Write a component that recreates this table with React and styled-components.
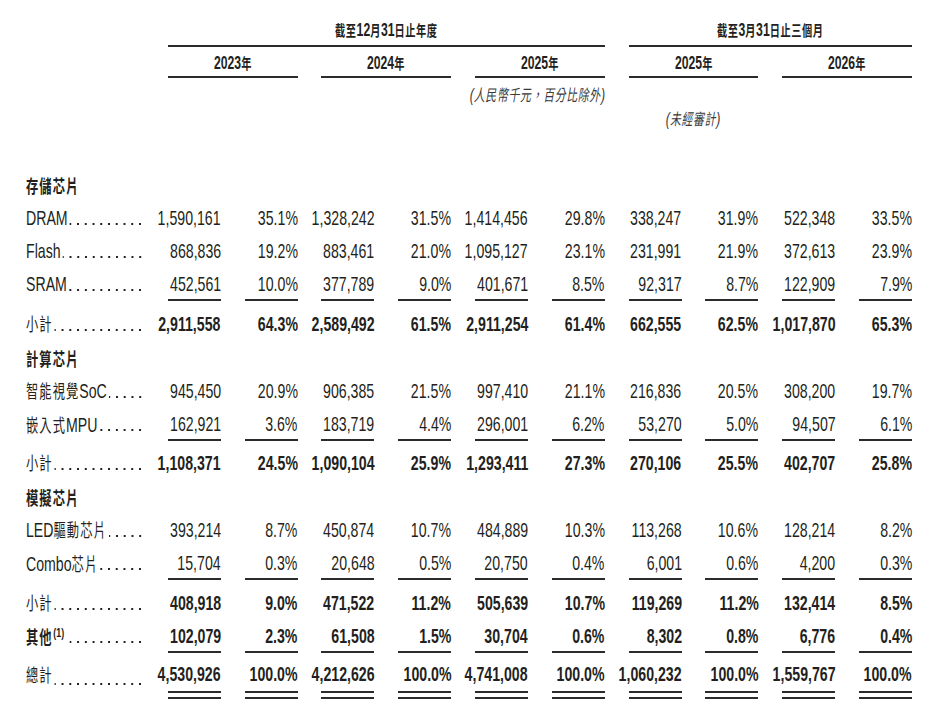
import React from 'react';
import styled, { createGlobalStyle, css } from 'styled-components';

const INK = '#231f20';
const RULE = '#2b2b2b';
const SQUEEZE = 0.68;
const LATIN = `"Liberation Sans", Arial, sans-serif`;
const HAN = `"Noto Sans CJK TC", "Noto Sans CJK SC", sans-serif`;
const HAN_RE = /([\u2e80-\u9fff\uf900-\ufaff\uff00-\uffef\u3000-\u303f]+)/;

const BODY_HAN = { size: 18, ls: 1.6 };
const HEAD_HAN = { size: 15, ls: 0.8 };
const NOTE_HAN = { size: 16, ls: 1 };

const ROWS = [
  { kind: 'section', label: '存儲芯片', mt: 45 },
  { kind: 'item', label: 'DRAM', values: ['1,590,161', '35.1%', '1,328,242', '31.5%', '1,414,456', '29.8%', '338,247', '31.9%', '522,348', '33.5%'] },
  { kind: 'item', label: 'Flash', values: ['868,836', '19.2%', '883,461', '21.0%', '1,095,127', '23.1%', '231,991', '21.9%', '372,613', '23.9%'] },
  { kind: 'item', label: 'SRAM', rule: 'single', values: ['452,561', '10.0%', '377,789', '9.0%', '401,671', '8.5%', '92,317', '8.7%', '122,909', '7.9%'] },
  { kind: 'sum', label: '小計', mt: 6, values: ['2,911,558', '64.3%', '2,589,492', '61.5%', '2,911,254', '61.4%', '662,555', '62.5%', '1,017,870', '65.3%'] },
  { kind: 'section', label: '計算芯片', mt: 3 },
  { kind: 'item', label: '智能視覺SoC', values: ['945,450', '20.9%', '906,385', '21.5%', '997,410', '21.1%', '216,836', '20.5%', '308,200', '19.7%'] },
  { kind: 'item', label: '嵌入式MPU', rule: 'single', values: ['162,921', '3.6%', '183,719', '4.4%', '296,001', '6.2%', '53,270', '5.0%', '94,507', '6.1%'] },
  { kind: 'sum', label: '小計', mt: 5, values: ['1,108,371', '24.5%', '1,090,104', '25.9%', '1,293,411', '27.3%', '270,106', '25.5%', '402,707', '25.8%'] },
  { kind: 'section', label: '模擬芯片', mt: 3 },
  { kind: 'item', label: 'LED驅動芯片', values: ['393,214', '8.7%', '450,874', '10.7%', '484,889', '10.3%', '113,268', '10.6%', '128,214', '8.2%'] },
  { kind: 'item', label: 'Combo芯片', rule: 'single', values: ['15,704', '0.3%', '20,648', '0.5%', '20,750', '0.4%', '6,001', '0.6%', '4,200', '0.3%'] },
  { kind: 'sum', label: '小計', mt: 6, values: ['408,918', '9.0%', '471,522', '11.2%', '505,639', '10.7%', '119,269', '11.2%', '132,414', '8.5%'] },
  { kind: 'other', label: '其他', note: '(1)', rule: 'single', values: ['102,079', '2.3%', '61,508', '1.5%', '30,704', '0.6%', '8,302', '0.8%', '6,776', '0.4%'] },
  { kind: 'total', label: '總計', mt: 4, rule: 'double', values: ['4,530,926', '100.0%', '4,212,626', '100.0%', '4,741,008', '100.0%', '1,060,232', '100.0%', '1,559,767', '100.0%'] },
];

const YEARS = [
  { text: '2023年', col: '2 / span 2' },
  { text: '2024年', col: '4 / span 2' },
  { text: '2025年', col: '6 / span 2' },
  { text: '2025年', col: '8 / span 2' },
  { text: '2026年', col: '10 / span 2' },
];

const GlobalStyle = createGlobalStyle`
  html, body { margin: 0; padding: 0; background: #fff; }
  body { font-family: ${LATIN}; color: ${INK}; }
`;

const Page = styled.div`
  width: 941px;
  box-sizing: border-box;
  padding: 14px 0 0 26px;
`;

const Row = styled.div`
  display: grid;
  grid-template-columns: 118px repeat(10, 53px);
  column-gap: 23.8px;
  align-items: start;
  margin-top: ${(p) => p.$mt || 0}px;
`;

const rules = {
  single: css`
    border-bottom: 2px solid ${RULE};
  `,
  double: css`
    border-bottom: 2px solid ${RULE};
    background: linear-gradient(${RULE}, ${RULE}) 0 34px / 100% 2px no-repeat;
  `,
};

const Cell = styled.div`
  grid-column: ${(p) => p.$col || 'auto'};
  display: flex;
  justify-content: ${(p) => p.$align || 'flex-end'};
  box-sizing: border-box;
  height: ${(p) => p.$h}px;
  line-height: ${(p) => p.$lh || p.$h}px;
  white-space: nowrap;
  font-size: ${(p) => p.$size || 20.8}px;
  font-weight: ${(p) => (p.$bold ? 700 : 400)};
  ${(p) => p.$rule && rules[p.$rule]}
`;

const Squeeze = styled.span`
  display: inline-block;
  flex: none;
  transform: scaleX(${SQUEEZE});
  transform-origin: ${(p) => p.$origin || 'right'} center;
`;

const LabelBox = styled(Squeeze)`
  display: flex;
  width: ${118 / SQUEEZE}px;
`;

/* dot leader, right-aligned so the last dot meets the value column */
const Leader = styled.span`
  flex: 1;
  min-width: 0;
  align-self: center;
  height: 4px;
  margin: 12px 0 0 ${(p) => p.$gap || 3}px;
  background: radial-gradient(ellipse 1.7px 1.2px at center, ${INK} 90%, transparent 100%)
    right center / ${7.75 / SQUEEZE}px 4px repeat-x;
`;

const Han = styled.span`
  font-family: ${HAN};
  font-size: ${(p) => p.$size}px;
  letter-spacing: ${(p) => p.$ls}px;
`;

const Sup = styled.span`
  font-size: 13px;
  font-weight: 700;
  vertical-align: 7px;
  line-height: 0;
  margin-left: 1px;
`;

const Note = styled(Squeeze)`
  font-style: italic;
  font-weight: 400;
  font-size: 18px;
  color: #3a3a3a;
`;

const Mixed = ({ text, han }) =>
  text
    .split(HAN_RE)
    .filter(Boolean)
    .map((part, i) =>
      HAN_RE.test(part) ? (
        <Han key={i} $size={han.size} $ls={han.ls}>
          {part}
        </Han>
      ) : (
        <React.Fragment key={i}>{part}</React.Fragment>
      )
    );

const heightOf = (row) => {
  if (row.kind === 'section') return 31;
  if (row.kind === 'total') return 42;
  return row.rule ? 34 : 33;
};

const DataRow = ({ row }) => {
  const h = heightOf(row);
  const lh = row.kind === 'total' ? 34 : h;
  const boldLabel = row.kind === 'section' || row.kind === 'other';
  const boldValues = row.kind === 'sum' || row.kind === 'other' || row.kind === 'total';

  return (
    <Row $mt={row.mt}>
      <Cell $h={h} $lh={lh} $align="flex-start" $bold={boldLabel}>
        <LabelBox $origin="left">
          <span>
            <Mixed text={row.label} han={BODY_HAN} />
            {row.note && <Sup>{row.note}</Sup>}
          </span>
          {row.kind !== 'section' && <Leader $gap={row.note ? 8 : 3} />}
        </LabelBox>
      </Cell>
      {row.values &&
        row.values.map((v, i) => (
          <Cell key={i} $h={h} $lh={lh} $bold={boldValues} $rule={row.rule}>
            <Squeeze>{v}</Squeeze>
          </Cell>
        ))}
    </Row>
  );
};

const Header = () => (
  <>
    <Row>
      <Cell $col="2 / 8" $h={33} $lh={31} $align="center" $size={18} $bold $rule="single">
        <Squeeze $origin="center">
          <Mixed text="截至12月31日止年度" han={HEAD_HAN} />
        </Squeeze>
      </Cell>
      <Cell $col="8 / 12" $h={33} $lh={31} $align="center" $size={18} $bold $rule="single">
        <Squeeze $origin="center">
          <Mixed text="截至3月31日止三個月" han={HEAD_HAN} />
        </Squeeze>
      </Cell>
    </Row>
    <Row>
      {YEARS.map((y, i) => (
        <Cell key={i} $col={y.col} $h={31} $lh={31} $align="center" $size={18} $bold $rule="single">
          <Squeeze $origin="center">
            <Mixed text={y.text} han={HEAD_HAN} />
          </Squeeze>
        </Cell>
      ))}
    </Row>
    <Row>
      <Cell $col="2 / 8" $h={33}>
        <Note>
          <Mixed text="(人民幣千元，百分比除外)" han={NOTE_HAN} />
        </Note>
      </Cell>
    </Row>
    <Row>
      <Cell $col="8 / 10" $h={14} $align="center">
        <Note $origin="center">
          <Mixed text="(未經審計)" han={NOTE_HAN} />
        </Note>
      </Cell>
    </Row>
  </>
);

export default function App() {
  return (
    <Page>
      <GlobalStyle />
      <Header />
      {ROWS.map((row, i) => (
        <DataRow key={i} row={row} />
      ))}
    </Page>
  );
}
